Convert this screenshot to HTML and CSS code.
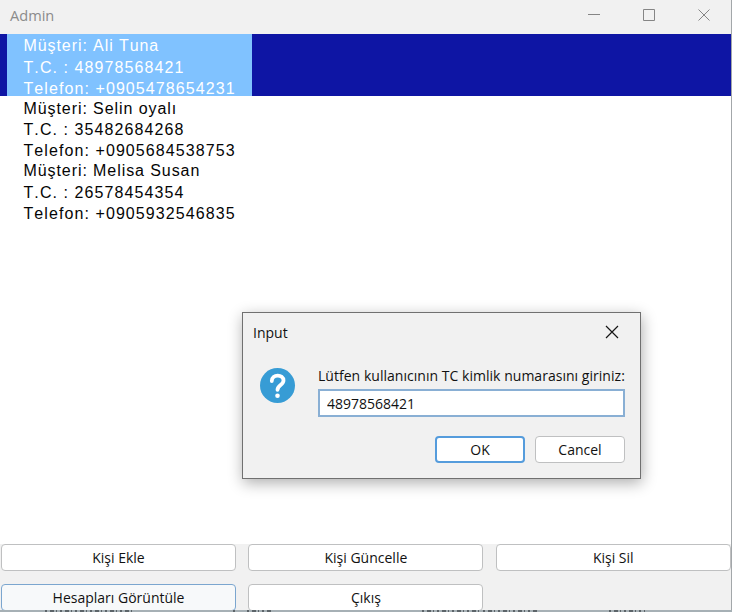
FILE: index.html
```html
<!DOCTYPE html>
<html lang="tr">
<head>
<meta charset="utf-8">
<title>Admin</title>
<link rel="stylesheet" href="styles.css">
</head>
<body>
<main class="window">
  <header class="titlebar">
    <span class="title">Admin</span>
    <svg class="controls" width="124" height="14" viewBox="0 0 124 14"><path d="M0 6.500h12M55.500 1.500h11v11h-11zM110.500 1.500l11 11m0-11l-11 11"/></svg>
  </header>
  <ul class="list">
    <li class="item selected"><p>Müşteri: Ali Tuna</p><p>T.C. : 48978568421</p><p>Telefon: +0905478654231</p></li>
    <li class="item"><p>Müşteri: Selin oyalı</p><p>T.C. : 35482684268</p><p>Telefon: +0905684538753</p></li>
    <li class="item"><p>Müşteri: Melisa Susan</p><p>T.C. : 26578454354</p><p>Telefon: +0905932546835</p></li>
  </ul>
  <footer class="actions">
    <button>Kişi Ekle</button><button>Kişi Güncelle</button><button>Kişi Sil</button>
    <button class="hover">Hesapları Görüntüle</button><button>Çıkış</button>
  </footer>
</main>
<svg class="behind" width="732" height="2" viewBox="0 0 732 2"><path d="M45 1h90M233 1h5M247 1h26M422 1h58M483 1h54M609 1h36"/></svg>
<section class="dialog">
  <header class="dialog-head"><span>Input</span>
    <svg width="14" height="14" viewBox="0 0 14 14"><path d="M1 1l12 12M13 1L1 13"/></svg>
  </header>
  <div class="dialog-body">
    <svg class="question" width="36" height="36" viewBox="0 0 36 36"><circle cx="17.500" cy="17.500" r="17.500"/><path d="M11.800 13C11.800 5.800 23.500 5.800 23.500 12.500C23.500 17 17.700 17 17.500 21.800"/><circle class="dot" cx="17.500" cy="27.700" r="2.300"/></svg>
    <div class="form">
      <label for="tc">Lütfen kullanıcının TC kimlik numarasını giriniz:</label>
      <input id="tc" value="48978568421">
      <div class="choices"><button class="primary">OK</button><button>Cancel</button></div>
    </div>
  </div>
</section>
</body>
</html>
```
FILE: styles.css
```css
* { box-sizing: border-box; }
body { margin: 0; width: 732px; height: 612px; overflow: hidden; background: #fff; font: 14px/20px "Open Sans", sans-serif; color: #111; }
.window { height: 610px; background: #f1f1f1; border-right: 1px solid #a3a7aa; display: flex; flex-direction: column; overflow: hidden; }
.titlebar { height: 34px; flex: none; display: flex; justify-content: space-between; padding: 6px 19px 0 10px; color: #8b8b8b; font-size: 14.600px; line-height: 19px; }
.controls { margin-top: 2px; fill: none; stroke: #858585; }
.list { margin: 0; padding: 0; list-style: none; height: 510px; flex: none; background: #fff; font: 16px/21px "Liberation Sans", sans-serif; letter-spacing: 1.080px; font-kerning: none; color: #050505; }
.item { height: 62px; padding: 2px 0 0 23.500px; white-space: nowrap; }
.item p { margin: 0; }
.item p:first-child { letter-spacing: .920px; }
.item:first-child p:first-child, .item:last-child p:first-child { height: 22px; }
.selected { padding-top: 1px; overflow: hidden; color: #fff; background: linear-gradient(90deg, #0e15a4 7px, #80c2ff 7px, #80c2ff 252px, #0e15a4 252px); }
button { font: inherit; color: inherit; background: #fff; border: 1px solid #bfc0c1; border-radius: 4px; padding: 0; }
.actions { display: grid; grid-template-columns: 235px 235px 235px; grid-auto-rows: 27px; column-gap: 12.400px; row-gap: 13px; padding-left: 1px; }
.actions .hover { border-color: #7ba6cf; background: #f7f9fa; }
.behind { display: block; background: #a6b0b5; }
.behind path { fill: none; stroke: #444b50; stroke-width: 1.500; stroke-dasharray: 2 3 4 2 1 3; }
.dialog { position: absolute; left: 242px; top: 312px; width: 399px; height: 167px; border: 1px solid #707070; background: #f1f1f1; box-shadow: 1px 4px 14px rgba(0,0,0,.32); }
.dialog-head { display: flex; justify-content: space-between; padding: 10px 21px 0 10px; height: 50px; }
.dialog-head svg { margin-top: 2px; fill: none; stroke: #161616; stroke-width: 1.200; }
.dialog-body { display: flex; padding: 0 15px 0 17px; }
.question { margin: 5px 22px 0 0; fill: #379cd5; }
.question path { fill: none; stroke: #fff; stroke-width: 3.800; stroke-linecap: round; }
.question .dot { fill: #fff; }
.form { flex: 1; min-width: 0; }
label { display: block; height: 26px; padding-top: 3px; white-space: nowrap; letter-spacing: .030px; }
input { display: block; width: 307px; height: 28px; border: 2px solid #89afd4; padding: 0 7px; font: inherit; color: inherit; background: #fff; }
.choices { display: flex; justify-content: flex-end; gap: 10px; margin-top: 19px; }
.choices button { width: 90px; height: 27px; }
.choices .primary { border: 2px solid #559cdc; }
```
